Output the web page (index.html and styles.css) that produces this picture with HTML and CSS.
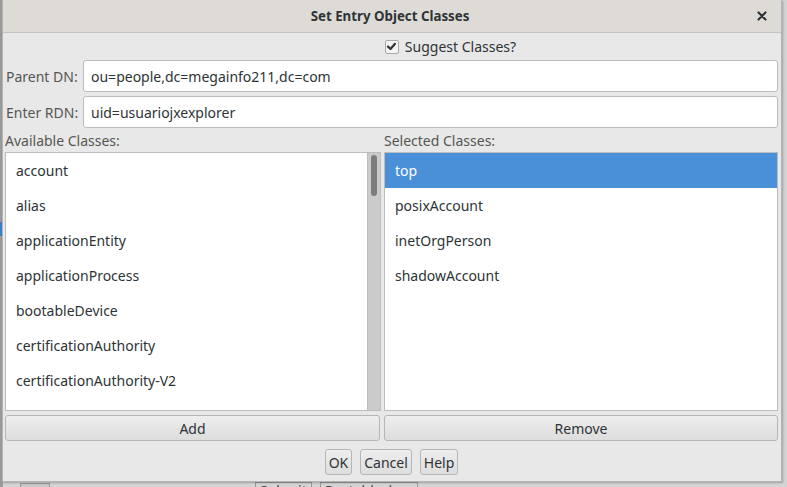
FILE: index.html
```html
<!DOCTYPE html>
<html>
<head>
<meta charset="utf-8">
<link rel="stylesheet" href="styles.css">
</head>
<body>
<div class="desktop">
  <div class="bg-edge"><span class="bg-sel"></span></div>
  <div class="bg-bottom">
    <span class="bg-box"></span>
    <span class="bg-btn bg-submit">Submit</span>
    <span class="bg-btn bg-post">Postableclass</span>
  </div>
  <div class="dialog">
    <div class="titlebar">
      <span class="title">Set Entry Object Classes</span>
      <span class="close"><svg width="10" height="10" viewBox="0 0 10 10"><path d="M1.5 1.5 L8.5 8.5 M8.5 1.5 L1.5 8.5" stroke="#2e3436" stroke-width="2.2" stroke-linecap="round"/></svg></span>
    </div>
    <div class="body">
      <div class="suggest">
        <span class="check"><svg width="11" height="11" viewBox="0 0 11 11"><path d="M2 5.6 L4.5 8 L9 2.8" fill="none" stroke="#2e3436" stroke-width="2.2" stroke-linecap="round" stroke-linejoin="round"/></svg></span>
        <span>Suggest Classes?</span>
      </div>
      <div class="form">
        <label class="lbl">Parent DN:</label>
        <div class="input">ou=people,dc=megainfo211,dc=com</div>
        <label class="lbl">Enter RDN:</label>
        <div class="input">uid=usuariojxexplorer</div>
      </div>
      <div class="lists">
        <div class="col">
          <div class="caption">Available Classes:</div>
          <div class="listwrap">
            <ul class="list">
              <li>account</li>
              <li>alias</li>
              <li>applicationEntity</li>
              <li>applicationProcess</li>
              <li>bootableDevice</li>
              <li>certificationAuthority</li>
              <li>certificationAuthority-V2</li>
              <li>country</li>
            </ul>
            <div class="scrollbar"><div class="thumb"></div></div>
          </div>
          <button class="btn wide">Add</button>
        </div>
        <div class="col">
          <div class="caption">Selected Classes:</div>
          <div class="listwrap">
            <ul class="list">
              <li class="sel">top</li>
              <li>posixAccount</li>
              <li>inetOrgPerson</li>
              <li>shadowAccount</li>
            </ul>
          </div>
          <button class="btn wide">Remove</button>
        </div>
      </div>
      <div class="actions">
        <button class="btn small">OK</button>
        <button class="btn small">Cancel</button>
        <button class="btn small">Help</button>
      </div>
    </div>
  </div>
</div>
</body>
</html>
```
FILE: styles.css
```css
* { box-sizing: border-box; }
html, body { margin: 0; padding: 0; }
body {
  width: 787px;
  height: 487px;
  overflow: hidden;
  background: #cfcfcf;
  font-family: "Noto Sans", "DejaVu Sans", sans-serif;
  font-size: 14px;
  color: #2e3436;
}
.desktop {
  position: relative;
  width: 787px;
  height: 487px;
  background: #d4d4d4;
}
.bg-edge {
  position: absolute;
  left: 0; top: 0;
  width: 3px; height: 487px;
  background: #9a9a9a;
}
.bg-sel {
  position: absolute;
  left: 0; top: 222px;
  width: 3px; height: 14px;
  background: #3c7fc4;
}
.bg-bottom {
  position: absolute;
  left: 0; top: 481px;
  width: 787px; height: 6px;
  overflow: hidden;
}
.bg-box {
  position: absolute;
  left: 20px; top: 2px;
  width: 30px; height: 10px;
  border: 1px solid #999;
  background: #c8c8c8;
}
.bg-btn {
  position: absolute;
  top: 1px;
  padding: 0 4px;
  border: 1px solid #999;
  font-size: 14px;
  line-height: 16px;
  color: #444;
}
.bg-submit { left: 255px; }
.bg-post { left: 320px; }
.dialog {
  position: absolute;
  left: 2px; top: 0;
  width: 780px;
  height: 482px;
  background: #e8e8e8;
  border: 1px solid #b4b4b4;
  border-top: none;
  box-shadow: 1px 1px 2px rgba(0,0,0,0.25);
  display: flex;
  flex-direction: column;
}
.titlebar {
  height: 33px;
  flex: none;
  background: #dedbd7;
  border-bottom: 1px solid #c6c3bf;
  display: flex;
  align-items: center;
  justify-content: center;
  position: relative;
}
.title {
  font-weight: bold;
  font-size: 13.3px;
  color: #2e3436;
  margin-left: -4px;
}
.close {
  position: absolute;
  right: 14px;
  top: 11px;
  width: 10px; height: 10px;
  display: flex;
}
.body {
  flex: 1;
  display: flex;
  flex-direction: column;
  padding: 0 3px 0 2px;
}
.suggest {
  height: 27px;
  display: flex;
  align-items: center;
  justify-content: center;
  gap: 6px;
  padding-left: 118px;
  color: #2e3436;
}
.check {
  width: 14px; height: 14px;
  border: 1px solid #a8a8a8;
  border-radius: 2px;
  background: #f4f4f4;
  display: flex;
  align-items: center;
  justify-content: center;
}
.form {
  display: grid;
  grid-template-columns: 78px 1fr;
  row-gap: 4px;
  align-items: center;
}
.lbl {
  color: #555753;
  padding-left: 1px;
}
.input {
  height: 32px;
  background: #fff;
  border: 1px solid #bcbcbc;
  border-radius: 3px;
  padding: 0 7px;
  display: flex;
  align-items: center;
  color: #2e3436;
}
.lists {
  display: grid;
  grid-template-columns: 376px 1fr;
  column-gap: 3px;
}
.col {
  display: flex;
  flex-direction: column;
}
.caption {
  height: 24px;
  padding-top: 3px;
  color: #555753;
}
.listwrap {
  height: 259px;
  display: flex;
  background: #fff;
  border: 1px solid #bdbdbd;
  overflow: hidden;
}
.list {
  list-style: none;
  margin: 0;
  padding: 0;
  flex: 1;
}
.list li {
  height: 35px;
  line-height: 35px;
  padding-left: 10px;
  color: #2e3436;
  white-space: nowrap;
}
.list li.sel {
  background: #4a90d9;
  color: #fff;
}
.scrollbar {
  width: 13px;
  flex: none;
  background: #cbcbcb;
  border-left: 1px solid #bdbdbd;
  padding: 2px 3px;
}
.thumb {
  height: 41px;
  border-radius: 3px;
  background: #7d7d7d;
}
.btn {
  font-family: inherit;
  font-size: 14px;
  color: #2e3436;
  background: linear-gradient(#eeeeee, #dddddd);
  border: 1px solid #b6b6b6;
  border-radius: 3px;
  margin: 0;
  cursor: default;
}
.wide {
  height: 26px;
  margin-top: 4px;
  width: 100%;
}
.col:first-child .wide { width: 375px; }
.actions {
  display: flex;
  justify-content: center;
  gap: 8px;
  padding-top: 8px;
  padding-left: 0;
}
.small {
  height: 26px;
  padding: 0 3px;
}
```
